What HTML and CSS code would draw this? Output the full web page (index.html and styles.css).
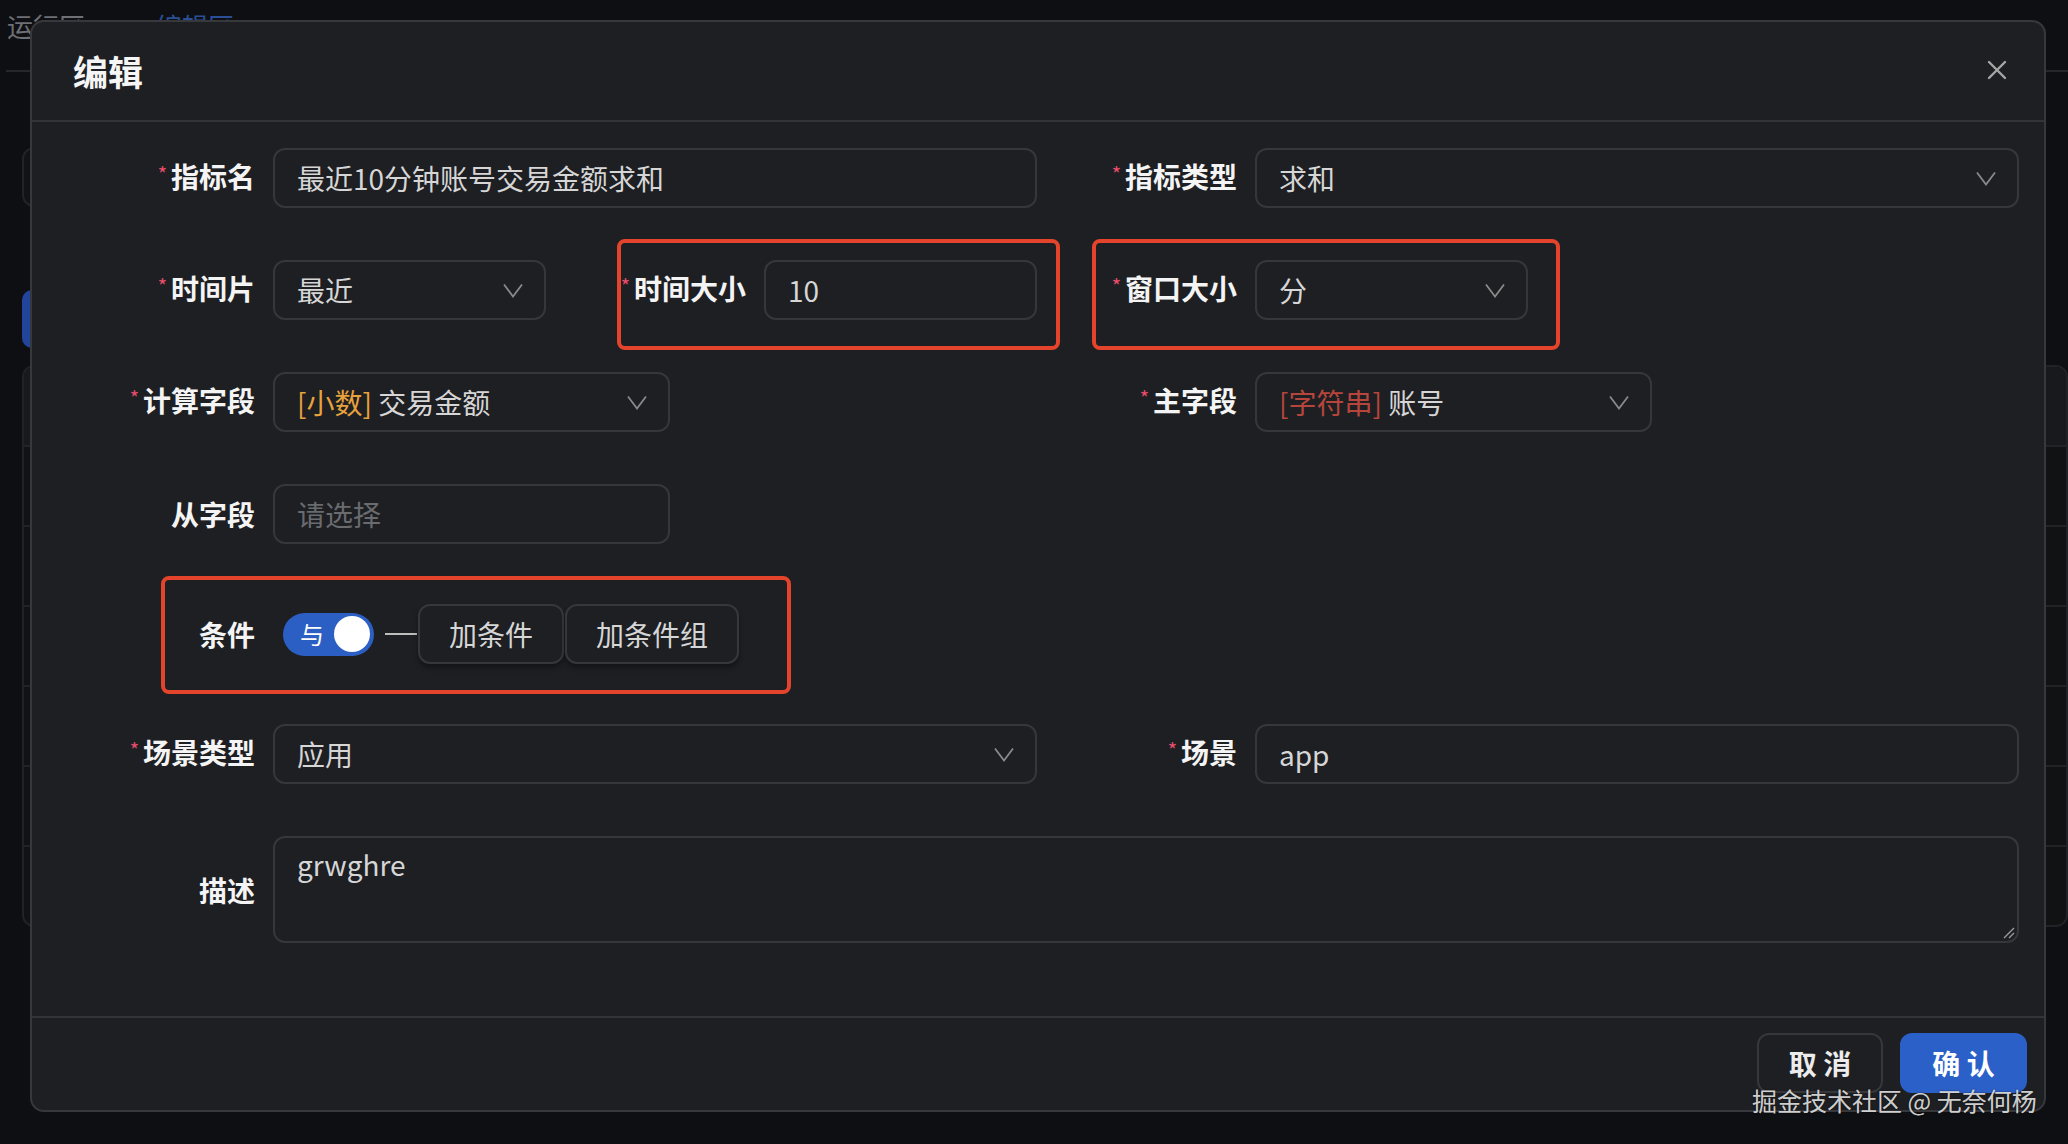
FILE: index.html
```html
<!DOCTYPE html>
<html lang="zh-CN">
<head>
<meta charset="utf-8">
<title>编辑</title>
<link rel="stylesheet" href="styles.css">
</head>
<body>
<div class="page">
  <div class="tabs"><span class="tab">运行区</span><span class="tab tab-active">编辑区</span></div>
  <div class="toolbar"><div class="search"></div></div>
  <div class="actions"><div class="primary-btn"></div></div>
  <div class="table">
    <div class="thead"></div>
    <div class="trow"></div>
    <div class="trow"></div>
    <div class="trow"></div>
    <div class="trow"></div>
    <div class="trow"></div>
    <div class="trow"></div>
  </div>
</div>

<div class="modal">
  <div class="modal-header">
    <div class="modal-title">编辑</div>
    <svg class="close" width="20" height="20" viewBox="0 0 20 20"><path d="M2 2 L18 18 M18 2 L2 18" stroke="#a6a6a6" stroke-width="2.4" stroke-linecap="round" fill="none"/></svg>
  </div>
  <div class="modal-body">
    <div class="form">
      <div class="item span2">
        <div class="label"><span class="req">*</span>指标名</div>
        <div class="field">最近10分钟账号交易金额求和</div>
      </div>
      <div class="item span2">
        <div class="label"><span class="req">*</span>指标类型</div>
        <div class="field select"><span>求和</span><svg class="chev" width="20" height="15" viewBox="0 0 20 15"><polyline points="1,1.5 10,13.5 19,1.5" fill="none" stroke="#8a8a8a" stroke-width="1.8"/></svg></div>
      </div>

      <div class="item">
        <div class="label"><span class="req">*</span>时间片</div>
        <div class="field select"><span>最近</span><svg class="chev" width="20" height="15" viewBox="0 0 20 15"><polyline points="1,1.5 10,13.5 19,1.5" fill="none" stroke="#8a8a8a" stroke-width="1.8"/></svg></div>
      </div>
      <div class="item">
        <div class="label"><span class="req">*</span>时间大小</div>
        <div class="field">10</div>
      </div>
      <div class="item">
        <div class="label"><span class="req">*</span>窗口大小</div>
        <div class="field select"><span>分</span><svg class="chev" width="20" height="15" viewBox="0 0 20 15"><polyline points="1,1.5 10,13.5 19,1.5" fill="none" stroke="#8a8a8a" stroke-width="1.8"/></svg></div>
      </div>
      <div class="item"></div>

      <div class="item span2">
        <div class="label"><span class="req">*</span>计算字段</div>
        <div class="field select fixed"><span><span class="tag-num">[小数]</span> 交易金额</span><svg class="chev" width="20" height="15" viewBox="0 0 20 15"><polyline points="1,1.5 10,13.5 19,1.5" fill="none" stroke="#8a8a8a" stroke-width="1.8"/></svg></div>
      </div>
      <div class="item span2">
        <div class="label"><span class="req">*</span>主字段</div>
        <div class="field select fixed"><span><span class="tag-str">[字符串]</span> 账号</span><svg class="chev" width="20" height="15" viewBox="0 0 20 15"><polyline points="1,1.5 10,13.5 19,1.5" fill="none" stroke="#8a8a8a" stroke-width="1.8"/></svg></div>
      </div>

      <div class="item span2">
        <div class="label">从字段</div>
        <div class="field fixed placeholder">请选择</div>
      </div>
      <div class="item span2"></div>

      <div class="item span4 cond">
        <div class="label">条件</div>
        <div class="cond-ctrl">
          <div class="switch"><span class="switch-text">与</span><span class="knob"></span></div>
          <span class="dash"></span>
          <div class="btn-ghost">加条件</div>
          <div class="btn-ghost">加条件组</div>
        </div>
      </div>

      <div class="item span2">
        <div class="label"><span class="req">*</span>场景类型</div>
        <div class="field select"><span>应用</span><svg class="chev" width="20" height="15" viewBox="0 0 20 15"><polyline points="1,1.5 10,13.5 19,1.5" fill="none" stroke="#8a8a8a" stroke-width="1.8"/></svg></div>
      </div>
      <div class="item span2">
        <div class="label"><span class="req">*</span>场景</div>
        <div class="field">app</div>
      </div>

      <div class="item span4">
        <div class="label">描述</div>
        <div class="field textarea">grwghre<svg class="resize" width="14" height="14" viewBox="0 0 14 14"><path d="M13 3 L3 13 M13 8 L8 13" stroke="#9a9a9a" stroke-width="1.4" fill="none"/></svg></div>
      </div>
    </div>
  </div>
  <div class="modal-footer">
    <div class="btn">取 消</div>
    <div class="btn btn-primary">确 认</div>
  </div>

  <div class="mark mark-1"></div>
  <div class="mark mark-2"></div>
  <div class="mark mark-3"></div>
</div>

<div class="watermark">掘金技术社区 @ 无奈何杨</div>
</body>
</html>
```

FILE: styles.css
```css
* { box-sizing: border-box; }
html, body { margin: 0; padding: 0; }
body {
  width: 2068px;
  height: 1144px;
  overflow: hidden;
  position: relative;
  background: #0e0f12;
  font-family: "Noto Sans CJK SC", "Noto Sans", sans-serif;
}

/* background page */
.page { height: 100%; }
.tabs {
  height: 72px;
  margin-left: 6px;
  border-bottom: 2px solid #26272a;
  display: flex;
  gap: 71px;
  padding-left: 1px;
  padding-top: 6px;
}
.tab { font-size: 26px; color: #6f7075; line-height: 40px; }
.tab-active { color: #2a4f98; }
.toolbar { margin: 75px 0 0 22px; }
.search {
  width: 400px; height: 60px;
  border: 2px solid #222326; border-radius: 12px;
  background: #121316;
}
.actions { margin: 83px 0 0 22px; }
.primary-btn {
  width: 120px; height: 58px;
  background: #22449a; border-radius: 10px;
}
.table {
  margin: 17px 0 0 22px;
  border: 2px solid #212225;
  border-radius: 12px;
  background: #111214;
  overflow: hidden;
}
.thead { height: 78px; background: #18191c; }
.trow { height: 80px; border-top: 2px solid #222326; }

/* modal */
.modal {
  position: absolute;
  left: 30px; top: 20px;
  width: 2016px;
  background: #1e1f23;
  border: 2px solid #37383c;
  border-radius: 14px;
  display: flex;
  flex-direction: column;
}
.modal-header {
  height: 100px;
  border-bottom: 2px solid #333438;
  display: flex;
  align-items: center;
  justify-content: space-between;
  padding: 0 39px 2px 41px;
}
.modal-title { font-size: 35px; font-weight: 700; color: #f5f5f5; }
.close { display: block; margin-right: -2px; }

.modal-body { padding: 26px 25px 73px 40px; }
.form {
  display: grid;
  grid-template-columns: repeat(4, 1fr);
  column-gap: 17px;
  row-gap: 52px;
}
.item { display: flex; align-items: center; min-height: 60px; }
.span2 { grid-column: span 2; }
.span4 { grid-column: span 4; }
.label {
  flex: none;
  width: 183px;
  margin-right: 18px;
  text-align: right;
  font-size: 28px;
  font-weight: 700;
  color: #f4f4f4;
  white-space: nowrap;
  line-height: 40px;
}
.req {
  color: #e84d6c;
  font-size: 20px;
  font-weight: 400;
  margin-right: 4px;
  position: relative;
  top: -6px;
}
.field {
  flex: 1;
  height: 60px;
  border: 2px solid #36373b;
  border-radius: 12px;
  background: #1e1f23;
  padding: 0 22px;
  display: flex;
  align-items: center;
  font-size: 28px;
  color: #d6d6d6;
  white-space: nowrap;
}
.select { justify-content: space-between; padding-right: 21px; }
.chev { display: block; flex: none; }
.fixed { flex: none; width: 397px; }
.placeholder { color: #6a6b6f; }
.tag-num { color: #e6a23c; }
.tag-str { color: #b6463c; }
.textarea {
  height: 107px;
  align-items: flex-start;
  padding-top: 6px;
  line-height: 40px;
  position: relative;
}
.resize { position: absolute; right: 2px; bottom: 2px; }

.cond { min-height: 76px; }
.cond-ctrl { display: flex; align-items: center; }
.switch {
  margin-left: 10px;
  width: 91px;
  height: 43px;
  border-radius: 22px;
  background: #2b5fc4;
  display: flex;
  align-items: center;
  justify-content: space-between;
  padding: 0 4px 0 17px;
}
.switch-text { color: #ffffff; font-size: 24px; line-height: 1; }
.knob { width: 36px; height: 36px; border-radius: 50%; background: #ffffff; }
.dash { width: 32px; height: 2px; background: #bdbdbd; margin: 0 1px 0 11px; }
.btn-ghost {
  height: 60px;
  border: 2px solid #36373b;
  border-radius: 12px;
  background: #1e1f23;
  padding: 0 29px;
  display: flex;
  align-items: center;
  font-size: 28px;
  color: #d6d6d6;
  box-shadow: 0 4px 5px rgba(0, 0, 0, 0.35);
  margin-right: 1px;
}

.modal-footer {
  height: 94px;
  border-top: 2px solid #333438;
  display: flex;
  justify-content: flex-end;
  align-items: flex-start;
  gap: 17px;
  padding: 15px 17px 0 0;
}
.btn {
  width: 126px;
  height: 60px;
  border: 2px solid #36373b;
  border-radius: 12px;
  display: flex;
  align-items: center;
  justify-content: center;
  font-size: 28px;
  font-weight: 700;
  color: #ececec;
  background: #1e1f23;
}
.btn-primary { width: 127px; background: #2b60c8; border-color: #2b60c8; color: #ffffff; }

/* annotation boxes */
.mark {
  position: absolute;
  border: 4px solid #e5442c;
  border-radius: 8px;
  pointer-events: none;
}
.mark-1 { left: 585px; top: 217px; width: 443px; height: 111px; }
.mark-2 { left: 1060px; top: 217px; width: 468px; height: 111px; }
.mark-3 { left: 129px; top: 554px; width: 630px; height: 118px; }

.watermark {
  position: absolute;
  left: 1752px;
  top: 1083px;
  font-size: 25px;
  line-height: 34px;
  color: rgba(232, 232, 232, 0.9);
  text-shadow: 0 0 2px rgba(0, 0, 0, 0.6);
  white-space: nowrap;
}
```
